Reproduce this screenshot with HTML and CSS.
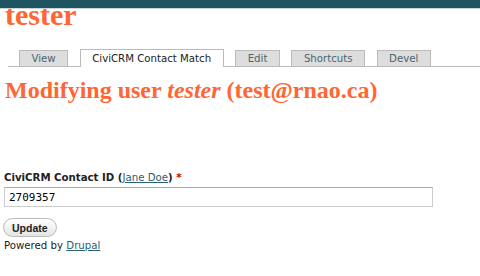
FILE: index.html
```html
<!DOCTYPE html>
<html lang="en">
<head>
    <meta charset="UTF-8">
    <meta name="viewport" content="width=device-width, initial-scale=1.0">
    <title>tester</title>
    <link rel="stylesheet" href="styles.css">
</head>
<body>
    <div class="topbar"></div>
    <h1 class="site-title">tester</h1>

    <ul class="tabs">
        <li class="tab"><a href="#">View</a></li>
        <li class="tab active"><a href="#">CiviCRM Contact Match</a></li>
        <li class="tab"><a href="#">Edit</a></li>
        <li class="tab"><a href="#">Shortcuts</a></li>
        <li class="tab"><a href="#">Devel</a></li>
    </ul>

    <h2 class="page-title">Modifying user <em>tester</em> (test@rnao.ca)</h2>

    <form class="match-form">
        <label for="contact-id">CiviCRM Contact ID (<a href="#">Jane Doe</a>) <span class="req">*</span></label>
        <input type="text" id="contact-id" value="2709357">
        <button type="button" class="btn">Update</button>
    </form>

    <p class="footer">Powered by <a href="#">Drupal</a></p>
</body>
</html>
```

FILE: styles.css
```css
body {
    margin: 0;
    font-family: "DejaVu Sans", sans-serif;
    font-size: 10.2px;
    color: #222;
    background: #fff;
}
a {
    color: #2a6170;
}
.topbar {
    position: relative;
    z-index: 1;
    height: 8px;
    background: #1f5560;
    border-bottom: 1px solid #c9d5d8;
}
.site-title {
    font-family: "Liberation Serif", serif;
    font-size: 30px;
    font-weight: bold;
    color: #ff6633;
    margin: -9px 0 0 5px;
    line-height: 30px;
}
.tabs {
    display: flex;
    gap: 11.5px;
    list-style: none;
    margin: 20px 0 0 8px;
    padding: 0 0 0 11px;
    border-bottom: 1px solid #bbb;
    height: 16px;
}
.tab a {
    display: block;
    height: 15px;
    line-height: 15px;
    padding: 0 11.5px;
    background: #ddd;
    border: 1px solid #bbb;
    border-bottom: none;
    color: #4a6670;
    text-decoration: none;
}
.tab.active a {
    background: #fff;
    color: #222;
    height: 17px;
    margin-top: -1px;
    line-height: 17px;
}
.page-title {
    font-family: "Liberation Serif", serif;
    font-size: 24px;
    font-weight: bold;
    color: #ff6633;
    margin: 10px 0 0 5px;
}
.page-title em {
    font-style: italic;
}
.match-form {
    margin: 68px 0 0 4px;
    display: flex;
    flex-direction: column;
    align-items: flex-start;
}
.match-form label {
    font-weight: bold;
}
.match-form label a {
    font-weight: normal;
}
.req {
    color: #c00;
}
.match-form input {
    margin-top: 4px;
    width: 419px;
    height: 14px;
    padding: 2px 4px;
    border: 1px solid #ccc;
    border-top-color: #aaa;
    font-family: "DejaVu Sans Mono", monospace;
    font-size: 11px;
}
.btn {
    margin: 11px 0 0 -1px;
    padding: 0 8px;
    border: 1px solid #bbb;
    border-radius: 10px;
    background: linear-gradient(#fff, #e4e4e4);
    color: #222;
    font-family: "Liberation Sans", sans-serif;
    font-size: 10.5px;
    font-weight: bold;
    height: 19px;
}
.footer {
    margin: 3px 0 0 4px;
}
```
